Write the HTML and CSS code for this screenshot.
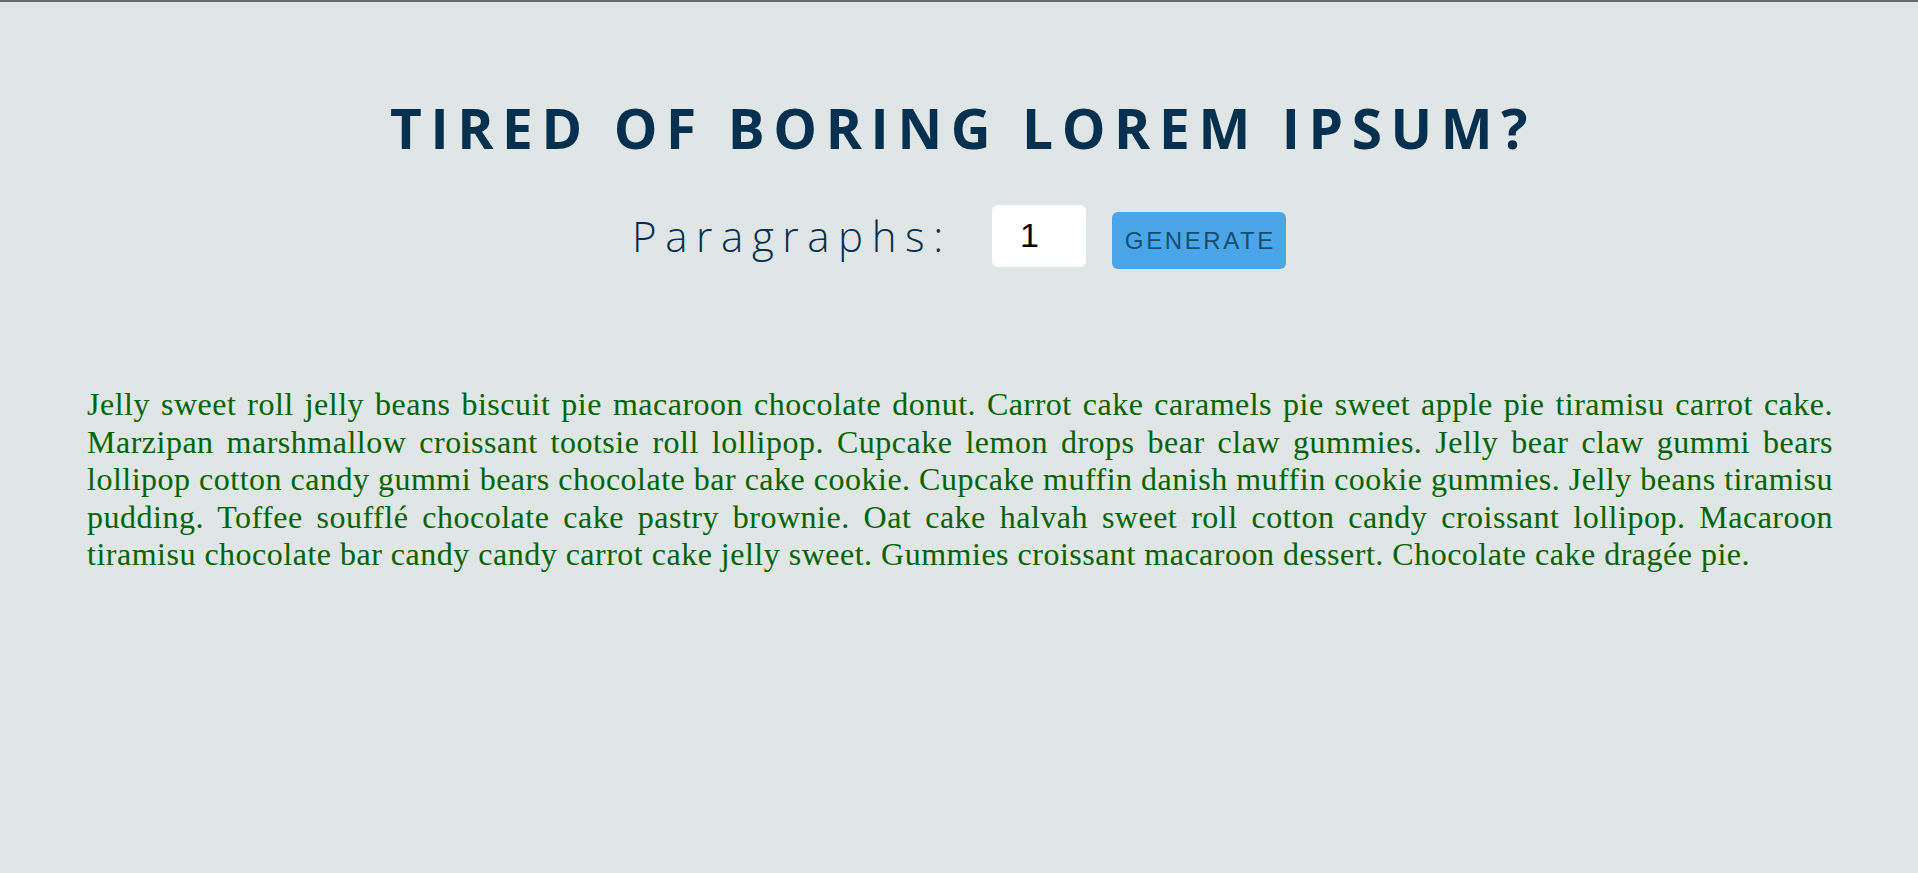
FILE: index.html
```html
<!DOCTYPE html>
<html lang="en">
<head>
<meta charset="utf-8">
<title>Lorem Ipsum Generator</title>
<link rel="stylesheet" href="styles.css">
</head>
<body>
<div class="topline"></div>
<main class="page">
  <h1 class="title">Tired of boring lorem ipsum?</h1>
  <form class="controls">
    <label class="label" for="amount">Paragraphs:</label>
    <input class="amount" id="amount" type="text" value="1">
    <button class="btn" type="button">Generate</button>
  </form>
  <article class="text">
    <p class="lorem">
      <span class="line">Jelly sweet roll jelly beans biscuit pie macaroon chocolate donut. Carrot cake caramels pie sweet apple pie tiramisu carrot cake.</span>
      <span class="line">Marzipan marshmallow croissant tootsie roll lollipop. Cupcake lemon drops bear claw gummies. Jelly bear claw gummi bears</span>
      <span class="line">lollipop cotton candy gummi bears chocolate bar cake cookie. Cupcake muffin danish muffin cookie gummies. Jelly beans tiramisu</span>
      <span class="line">pudding. Toffee soufflé chocolate cake pastry brownie. Oat cake halvah sweet roll cotton candy croissant lollipop. Macaroon</span>
      <span class="line last">tiramisu chocolate bar candy candy carrot cake jelly sweet. Gummies croissant macaroon dessert. Chocolate cake dragée pie.</span>
    </p>
  </article>
</main>
</body>
</html>
```

FILE: styles.css
```css
html, body {
  margin: 0;
  padding: 0;
}
body {
  background: #e0e5e5;
  min-height: 873px;
}
.topline {
  height: 2px;
  background: #6a6a6a;
}
.page {
  display: flex;
  flex-direction: column;
  align-items: center;
  padding-top: 88px;
}
.title {
  margin: 0;
  font-family: "Open Sans", sans-serif;
  font-weight: 700;
  font-size: 55px;
  line-height: 76px;
  letter-spacing: 8.6px;
  text-transform: uppercase;
  color: #06304f;
  padding-left: 8px;
}
.controls {
  display: flex;
  align-items: center;
  margin-top: 36px;
}
.label {
  font-family: "Open Sans", sans-serif;
  font-weight: 300;
  font-size: 42px;
  letter-spacing: 8.6px;
  color: #06304f;
  margin-right: 40px;
}
.amount {
  box-sizing: border-box;
  width: 94px;
  height: 62px;
  border: none;
  border-radius: 6px;
  background: #fff;
  font-family: "Liberation Sans", Arial, sans-serif;
  font-size: 34px;
  padding: 0 0 0 28px;
  color: #000;
  margin-right: 26px;
  outline: none;
}
.btn {
  box-sizing: border-box;
  width: 174px;
  height: 57px;
  border: none;
  border-radius: 6px;
  background: #4aa6e8;
  color: #174e6e;
  font-family: "Liberation Sans", Arial, sans-serif;
  font-size: 24px;
  letter-spacing: 2.6px;
  text-transform: uppercase;
  padding: 0 0 0 3px;
  margin-top: 10px;
}
.text {
  align-self: stretch;
  padding: 117px 85px 0 87px;
}
.lorem {
  margin: 0;
  font-family: "Liberation Serif", "Times New Roman", serif;
  font-size: 32px;
  line-height: 37.5px;
  letter-spacing: 0.5px;
  color: #006400;
}
.line {
  display: block;
  text-align: justify;
  text-align-last: justify;
  white-space: nowrap;
}
.line.last {
  text-align-last: left;
}
```
